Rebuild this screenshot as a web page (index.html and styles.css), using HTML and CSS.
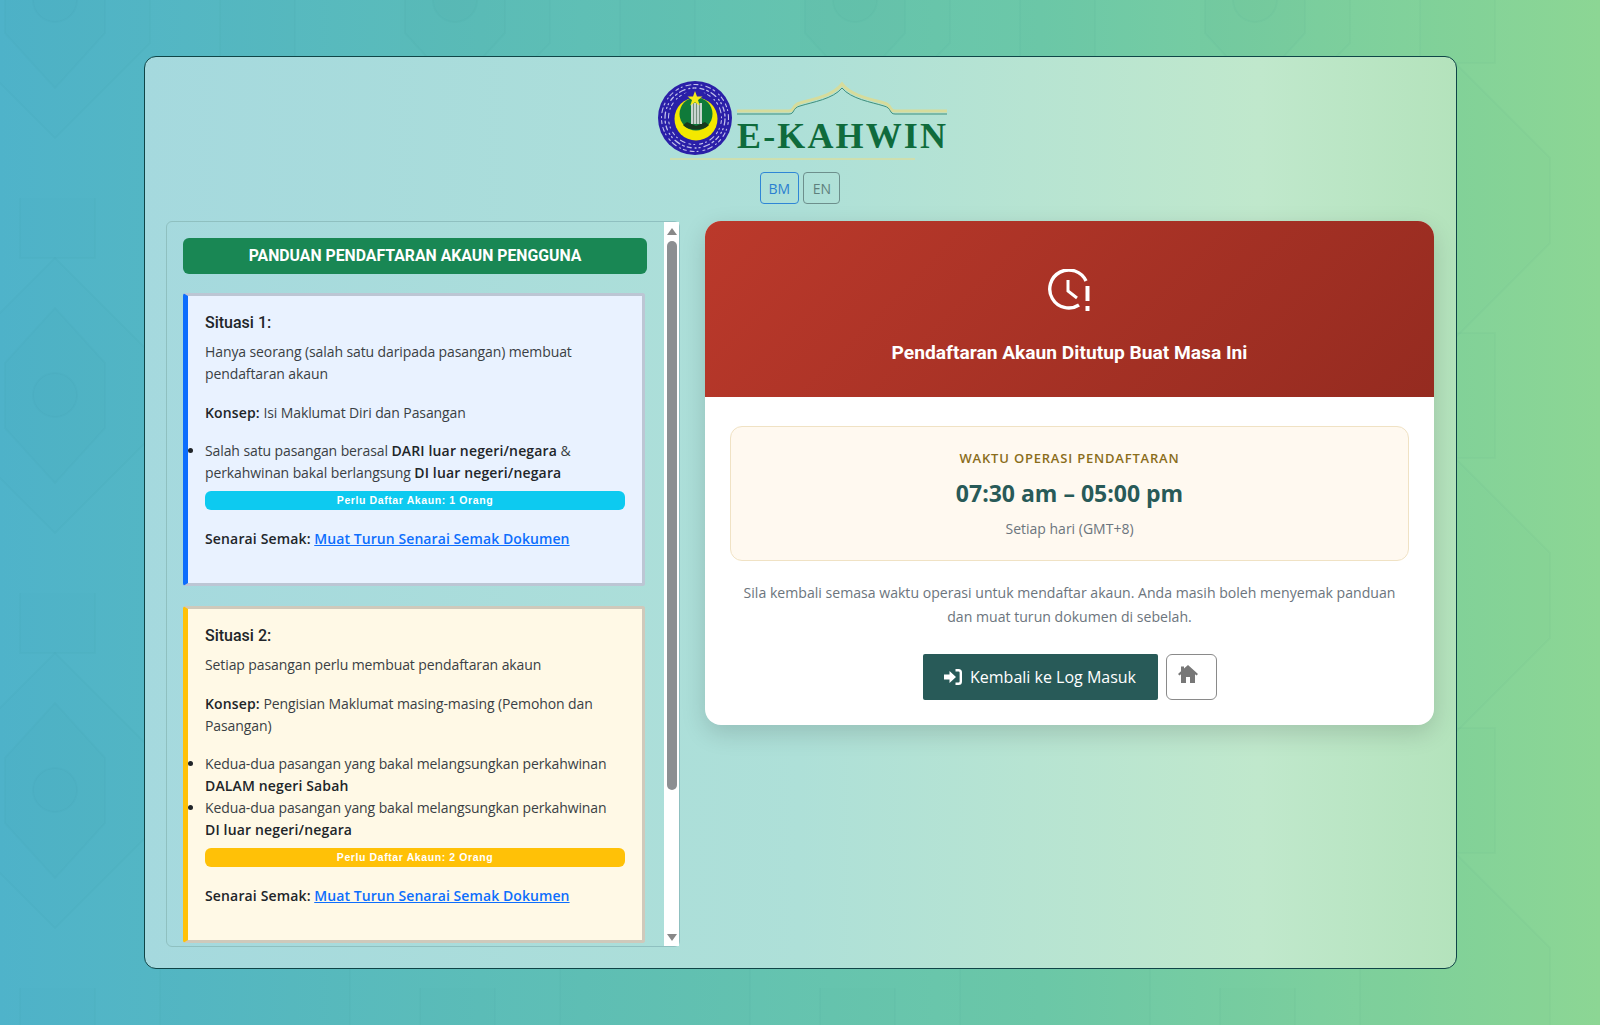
FILE: index.html
```html
<!DOCTYPE html>
<html lang="ms">
<head>
  <meta charset="UTF-8">
  <title>E-Kahwin - Pendaftaran Akaun</title>
  <meta name="viewport" content="width=device-width, initial-scale=1.0">
  <link rel="stylesheet" href="styles.css">
</head>
<body>

  <div class="main-card">

    <div class="brand">
      <svg class="logo" width="300" height="90" viewBox="0 0 300 90">
        <!-- crest -->
        <circle cx="40" cy="40" r="37" fill="#2a1fa8"/>
        <g fill="none" stroke="#dcdcf6" stroke-linecap="round" opacity="0.85" transform="rotate(-90 40 40)">
          <circle cx="40" cy="40" r="33.500" stroke-width="1.100" stroke-dasharray="3 3 1 4 5 3 2 5 1 3 4 4"/>
          <circle cx="40" cy="40" r="30" stroke-width="1.300" stroke-dasharray="1 4 4 3 2 3 6 4 1 3"/>
          <circle cx="40" cy="40" r="26.500" stroke-width="1.100" stroke-dasharray="5 4 1 3 3 5 1 3 2 4"/>
        </g>
        <circle cx="40" cy="24" r="13" fill="#2a1fa8"/>
        <circle cx="41" cy="41" r="21.500" fill="#f4e800"/>
        <circle cx="41" cy="36" r="16.500" fill="#0f7a3a"/>
        <path d="M28 47 C33 53 49 53 54 47 L50 44 L41 48 L32 44 Z" fill="#173a1e"/>
        <rect x="36" y="25" width="11" height="21" fill="#c9d6cf"/>
        <path d="M38.500 25v21M41.500 25v21M44.500 25v21" stroke="#76907f" stroke-width="1"/>
        <polygon points="40,13 42,18.500 47.500,18.500 43,22 44.700,27.500 40,24.200 35.300,27.500 37,22 32.500,18.500 38,18.500" fill="#f5ea1a"/>
        <!-- roof line -->
        <path d="M82 33 H134 C140 33 137 27 145 25 C158 21 178 18 187 6 C196 18 216 21 229 25 C237 27 234 33 240 33 H292" fill="none" stroke="#d6dc9c" stroke-width="3"/>
        <path d="M82 36 H134 C140 36 137 30 145 28 C158 24 178 21 187 10 C196 21 216 24 229 28 C237 30 234 36 240 36 H292" fill="none" stroke="#3f8f7c" stroke-width="1"/>
        <text class="logo-text" x="82" y="70" textLength="209" lengthAdjust="spacing">E-KAHWIN</text>
        <path d="M15 81 H260" stroke="#d6dfa6" stroke-width="2" opacity="0.8"/>
      </svg>
      <div class="lang-switch">
        <button class="lang active">BM</button>
        <button class="lang">EN</button>
      </div>
    </div>

    <div class="columns">

      <div class="guide-panel">
        <div class="guide-scroll">
          <h2 class="guide-title">PANDUAN PENDAFTARAN AKAUN PENGGUNA</h2>

          <div class="situation blue">
            <h3>Situasi 1:</h3>
            <p>Hanya seorang (salah satu daripada pasangan) membuat pendaftaran akaun</p>
            <p class="concept"><strong>Konsep:</strong> Isi Maklumat Diri dan Pasangan</p>
            <ul>
              <li>Salah satu pasangan berasal <strong>DARI luar negeri/negara</strong> &amp; perkahwinan bakal berlangsung <strong>DI luar negeri/negara</strong></li>
            </ul>
            <div class="need-badge cyan">Perlu Daftar Akaun: 1 Orang</div>
            <p class="checklist"><strong>Senarai Semak:</strong> <a href="#">Muat Turun Senarai Semak Dokumen</a></p>
          </div>

          <div class="situation yellow">
            <h3>Situasi 2:</h3>
            <p>Setiap pasangan perlu membuat pendaftaran akaun</p>
            <p class="concept"><strong>Konsep:</strong> Pengisian Maklumat masing-masing (Pemohon dan Pasangan)</p>
            <ul>
              <li>Kedua-dua pasangan yang bakal melangsungkan perkahwinan<br><strong>DALAM negeri Sabah</strong></li>
              <li>Kedua-dua pasangan yang bakal melangsungkan perkahwinan<br><strong>DI luar negeri/negara</strong></li>
            </ul>
            <div class="need-badge amber">Perlu Daftar Akaun: 2 Orang</div>
            <p class="checklist"><strong>Senarai Semak:</strong> <a href="#">Muat Turun Senarai Semak Dokumen</a></p>
          </div>
        </div>

        <div class="scrollbar">
          <svg width="10" height="7" viewBox="0 0 10 7"><path d="M5 0L10 7H0Z" fill="#888"/></svg>
          <div class="scroll-track"><div class="scroll-thumb"></div></div>
          <svg width="10" height="7" viewBox="0 0 10 7"><path d="M5 7L10 0H0Z" fill="#888"/></svg>
        </div>
      </div>

      <div class="closed-card">
        <div class="closed-header">
          <svg class="clock-icon" width="44" height="44" viewBox="0 0 44 44" fill="none" stroke="#fff" stroke-width="3.400">
            <path d="M31 36 A19 19 0 1 1 38 12"/>
            <path d="M20 11 V22 L29 29" stroke-width="3"/>
            <path d="M39.500 17 V32" stroke-width="4"/>
            <path d="M39.500 37 V42" stroke-width="4"/>
          </svg>
          <h1>Pendaftaran Akaun Ditutup Buat Masa Ini</h1>
        </div>
        <div class="closed-body">
          <div class="hours-box">
            <div class="hours-label">WAKTU OPERASI PENDAFTARAN</div>
            <div class="hours-time">07:30 am – 05:00 pm</div>
            <div class="hours-note">Setiap hari (GMT+8)</div>
          </div>
          <p class="closed-text">Sila kembali semasa waktu operasi untuk mendaftar akaun. Anda masih boleh menyemak panduan dan muat turun dokumen di sebelah.</p>
          <div class="btn-group">
            <a class="btn login" href="#">
              <svg width="18" height="16" viewBox="0 0 18 16" fill="#fff"><path d="M0 5.500H5.500V2L12 8L5.500 14V10.500H0Z"/><path d="M11.500 1.200H14.500C15.800 1.200 16.800 2.200 16.800 3.500V12.500C16.800 13.800 15.800 14.800 14.500 14.800H11.500" fill="none" stroke="#fff" stroke-width="2.400"/></svg>
              Kembali ke Log Masuk
            </a>
            <a class="btn home" href="#">
              <svg width="20" height="18" viewBox="0 0 20 18" fill="#777"><path d="M10 0L20 9L18.500 10.500L17 9.200V18H12V12H8V18H3V9.200L1.500 10.500L0 9L3 6.300V1.500H6V3.600Z"/></svg>
            </a>
          </div>
        </div>
      </div>

    </div>
  </div>

</body>
</html>
```

FILE: styles.css
```css
* {
  box-sizing: border-box;
}

html, body {
  height: 100%;
}

body {
  margin: 0;
  padding: 56px 143px 56px 144px;
  font-family: "Open Sans", "Noto Sans", sans-serif;
  color: #212529;
  background-color: #4fb4c8;
  background-image:
    url("data:image/svg+xml,%3Csvg xmlns='http://www.w3.org/2000/svg' width='400' height='395' viewBox='0 0 400 395'%3E%3Cg fill='%23005a5a' fill-opacity='0.012' stroke='%23005a5a' stroke-opacity='0.022' stroke-width='2'%3E%3Cpath d='M55 60 L150 155 L150 240 L55 335 L-40 240 L-40 155 Z'/%3E%3Cpath d='M55 110 L105 165 L105 230 L55 285 L5 230 L5 165 Z'/%3E%3Ccircle cx='55' cy='197' r='22'/%3E%3Crect x='20' y='-60' width='75' height='120'/%3E%3Cpath d='M255 260 L350 355 L350 440 L255 535 L160 440 L160 355 Z'/%3E%3Cpath d='M255 -135 L350 -40 L350 45 L255 140 L160 45 L160 -40 Z'/%3E%3Crect x='220' y='135' width='75' height='125'/%3E%3C/g%3E%3C/svg%3E"),
    linear-gradient(90deg, #4fb3ca 0%, #5cbdb8 30%, #6cc8a8 65%, #8cd694 100%);
  background-size: 400px 395px, 100% 100%;
  background-position: 0 198px, 0 0;
}

.main-card {
  height: 913px;
  padding: 21px 22px 0 21px;
  border: 1px solid #0f4547;
  border-radius: 12px;
  background: linear-gradient(90deg, #a5d9de 0%, #aee0d8 50%, #c0e8cc 85%, #b4e3bc 100%);
}

.brand {
  display: flex;
  flex-direction: column;
  align-items: center;
  height: 143px;
}

.logo {
  display: block;
  margin-left: 10px;
}

.logo-text {
  font-family: "Liberation Serif", serif;
  font-size: 36px;
  font-weight: bold;
  fill: #0f6b3c;
}

.lang-switch {
  display: flex;
  gap: 4px;
  margin-top: 4px;
}

.lang {
  height: 32px;
  padding: 0 8.500px;
  font-family: inherit;
  font-size: 14px;
  border: 1px solid #6d8f8c;
  border-radius: 4px;
  background: transparent;
  color: #5e7f7c;
}

.lang.active {
  padding: 0 8px;
  border-color: #2f86d6;
  color: #2a7fd0;
}

.columns {
  display: flex;
  gap: 25px;
  align-items: flex-start;
}

.guide-panel {
  display: flex;
  flex: 0 0 514px;
  height: 726px;
  border: 1px solid #8fc0c0;
  border-radius: 6px;
}

.guide-scroll {
  flex: 1;
  padding: 16px 0 0 16px;
  overflow: hidden;
}

.scrollbar {
  display: flex;
  flex-direction: column;
  align-items: center;
  flex: 0 0 15px;
  padding: 6px 0 5px 0;
  background: #fff;
}

.scroll-track {
  flex: 1;
  width: 100%;
  padding: 6px 2px 0 3px;
}

.scroll-thumb {
  height: 549px;
  background: #8c8f92;
  border-radius: 5px;
}

.guide-title {
  width: 464px;
  height: 36px;
  margin: 0 0 19px 0;
  font-family: Roboto, sans-serif;
  font-size: 15.800px;
  font-weight: 700;
  line-height: 36px;
  text-align: center;
  color: #fff;
  background: #198754;
  border-radius: 6px;
}

.situation {
  width: 462px;
  margin-bottom: 20px;
  padding: 17px 17px 16px 17px;
  font-size: 14px;
  letter-spacing: -0.1px;
  line-height: 22px;
  border: 3px solid;
  border-left: 5px solid;
  border-radius: 3px;
}

.situation.blue {
  height: 293px;
  background: #e9f2ff;
  border-color: #bcc6d4;
  border-left-color: #0d6efd;
}

.situation.yellow {
  height: 337px;
  background: #fff9e6;
  border-color: #cfc9bb;
  border-left-color: #ffc107;
}

.situation h3 {
  margin: 0 0 9px 0;
  font-family: Roboto, sans-serif;
  font-size: 16px;
  font-weight: 500;
  letter-spacing: 0;
  line-height: 19px;
}

.situation p {
  margin: 0 0 17px 0;
  color: #3a3f44;
}

.situation .concept {
  margin-bottom: 16px;
}

.situation strong {
  color: #212529;
  font-weight: 600;
  letter-spacing: 0.15px;
}

.situation ul {
  margin: 0;
  padding: 0;
  color: #3a3f44;
}

.situation li::marker {
  color: #212529;
}

.need-badge {
  height: 19px;
  margin-top: 7px;
  font-family: "Liberation Sans", sans-serif;
  font-size: 10.500px;
  font-weight: 700;
  letter-spacing: 0.6px;
  line-height: 19px;
  text-align: center;
  color: #fff;
  border-radius: 6px;
}

.need-badge.cyan {
  background: #0dcaf0;
}

.need-badge.amber {
  background: #ffc107;
}

.situation .checklist {
  margin: 18px 0 0 0;
}

.checklist a {
  color: #0d6efd;
  font-weight: 600;
  letter-spacing: 0.08px;
}

.closed-card {
  flex: 0 0 729px;
  height: 504px;
  background: #fff;
  border-radius: 16px;
  box-shadow: 0 8px 24px rgba(0, 0, 0, 0.15);
  overflow: hidden;
}

.closed-header {
  height: 176px;
  padding-top: 48px;
  text-align: center;
  background: linear-gradient(135deg, #bb392b, #952b20);
}

.clock-icon {
  display: block;
  margin: 0 auto 28px auto;
}

.closed-header h1 {
  margin: 0;
  font-family: Roboto, sans-serif;
  font-size: 19.200px;
  font-weight: 700;
  line-height: 24px;
  color: #fff;
}

.closed-body {
  padding: 29px 25px 0 25px;
  text-align: center;
}

.hours-box {
  height: 135px;
  padding-top: 22px;
  background: #fff9f0;
  border: 1px solid #f0e2c4;
  border-radius: 12px;
}

.hours-label {
  font-size: 13px;
  font-weight: 600;
  letter-spacing: 0.8px;
  line-height: 18px;
  color: #8a6d1b;
}

.hours-time {
  margin-top: 11px;
  font-size: 23px;
  font-weight: 700;
  line-height: 30px;
  color: #285a58;
}

.hours-note {
  margin-top: 11px;
  font-size: 14px;
  line-height: 20px;
  color: #6c757d;
}

.closed-text {
  margin: 20px 5px 26px 5px;
  font-size: 14.100px;
  line-height: 23.500px;
  color: #6c757d;
}

.btn-group {
  display: flex;
  justify-content: center;
  gap: 8px;
}

.btn {
  display: flex;
  align-items: center;
  justify-content: center;
  height: 46px;
  text-decoration: none;
  border-radius: 2px;
}

.btn.login {
  width: 235px;
  gap: 8px;
  font-size: 16px;
  color: #fff;
  background: #285a58;
}

.btn.home {
  width: 51px;
  padding: 0 6px 6px 0;
  border: 1px solid #8a8a8a;
  border-radius: 6px;
}
```
